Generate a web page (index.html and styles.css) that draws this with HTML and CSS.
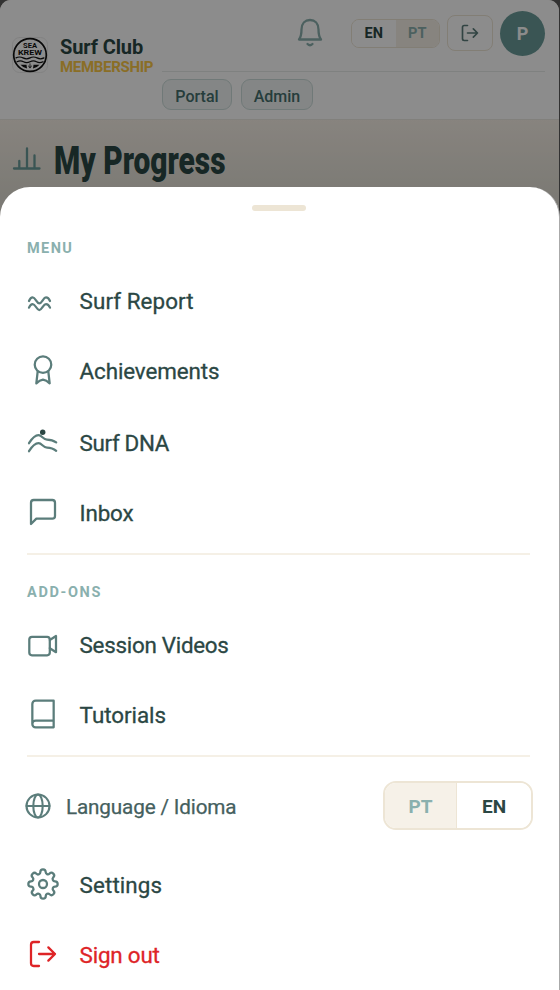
FILE: index.html
```html
<!DOCTYPE html>
<html lang="en">
<head>
<meta charset="utf-8">
<title>Surf Club</title>
<link rel="stylesheet" href="styles.css">
</head>
<body>
<div class="app">
  <header class="header">
    <div class="brand">
      <svg class="logo" viewBox="0 0 36 36">
        <rect x=".5" y=".5" width="35" height="35" rx="7" fill="#fff" stroke="#ebebeb"/>
        <circle cx="18" cy="18" r="16.3" fill="none" stroke="#111" stroke-width="1.7"/>
        <text x="18" y="10.8" textLength="14" lengthAdjust="spacingAndGlyphs">SEA</text>
        <text x="18" y="17.6" textLength="24" lengthAdjust="spacingAndGlyphs">KREW</text>
        <path d="M4 20.900q3.500-1.800 7 0t7 0 7 0 7 0M5 24.700q3.300-1.800 6.500 0t6.500 0 6.500 0 6.500 0" fill="none" stroke="#111" stroke-width="1.2"/>
        <path d="M8.500 27.700h6l.5 3.800q-4-.8-6.500-3.800zM27.500 27.700h-6l-.5 3.800q4-.8 6.500-3.800z" fill="#111"/>
        <path d="M18 26.800v4M16.700 29q0 1.600 1.300 1.600t1.300-1.600" fill="none" stroke="#111" stroke-width=".8"/>
      </svg>
      <div class="brand-text"><div class="brand-name">Surf Club</div><div class="brand-sub">MEMBERSHIP</div></div>
    </div>
    <div class="header-main">
      <div class="tools">
        <svg class="bell" viewBox="0 0 26 30"><path d="M2 21.500C4.300 18.500 4.500 16 4.500 11.500C4.500 5.500 8 2 13 2s8.500 3.500 8.500 9.500c0 4.500.2 7 2.500 10zM10.500 26q2.500 2.400 5 0"/></svg>
        <div class="mini-toggle"><span class="on">EN</span><span class="off">PT</span></div>
        <button class="exit"><svg viewBox="0 0 24 24"><path d="M9 21H5a2 2 0 0 1-2-2V5a2 2 0 0 1 2-2h4M16 17l5-5-5-5M21 12H9"/></svg></button>
        <div class="avatar">P</div>
      </div>
      <nav class="tabs"><a class="tab portal">Portal</a><a class="tab admin">Admin</a></nav>
    </div>
  </header>
  <main class="page">
    <svg class="chart" viewBox="0 0 30 26"><path d="M2 22.500h25.500M7.300 22V15M15 22V2.500M22.500 22V9.500"/></svg>
    <h1>My Progress</h1>
  </main>
</div>
<div class="overlay"></div>
<section class="sheet">
  <div class="handle"></div>
  <h2 class="label">MENU</h2>
  <a class="item"><svg class="icon wide" viewBox="0 0 32 32"><path d="M2 17C3 14.500 4 13.300 5.700 13.300C8.500 13.300 9.500 19.300 12.300 19.300S16.300 13.300 19 13.300C20.800 13.300 22 14.500 23 17M2 23.700C3 21.200 4 20 5.700 20C8.500 20 9.500 26 12.300 26S16.300 20 19 20C20.800 20 22 21.200 23 23.700"/></svg><span class="t-report">Surf Report</span></a>
  <a class="item"><svg class="icon" viewBox="0 0 24 24"><circle cx="12" cy="8" r="6.200"/><path d="M8 13.200L7 22q2.500-2.300 5-2.700q2.500.4 5 2.700l-1-8.800"/></svg><span class="t-achieve">Achievements</span></a>
  <a class="item gap"><svg class="icon wide" viewBox="0 0 32 32"><path d="M2 17.200C5 12.500 8.500 9.200 11.500 9.200C15 9.200 16 13.500 20 13.500C24 13.500 26 14 29.200 16.300M2 25.200C5 20.500 8.500 17.200 11.500 17.200C15 17.200 16 21.500 20 21.500C24 21.500 26 22 29.200 24.800"/><circle class="dot" cx="15.700" cy="6.300" r="2.700"/></svg><span class="t-dna">Surf DNA</span></a>
  <a class="item"><svg class="icon" viewBox="0 0 24 24"><path d="M21 15a2 2 0 0 1-2 2H7l-4 4V5a2 2 0 0 1 2-2h14a2 2 0 0 1 2 2z"/></svg><span class="t-inbox">Inbox</span></a>
  <div class="rule"></div>
  <h2 class="label addons">ADD-ONS</h2>
  <a class="item"><svg class="icon wide" viewBox="0 0 32 32"><rect x="2.300" y="8.800" width="20.500" height="18.500" rx="2.700"/><path d="M22.800 12l6.200-4v16.200l-6.200-4"/></svg><span class="t-videos">Session Videos</span></a>
  <a class="item"><svg class="icon" viewBox="0 0 24 24"><path d="M4 19.500A2.500 2.500 0 0 1 6.500 17H20M6.500 2H20v20H6.500A2.500 2.500 0 0 1 4 19.500v-15A2.500 2.500 0 0 1 6.500 2z"/></svg><span class="t-tutorials">Tutorials</span></a>
  <div class="rule"></div>
  <div class="language">
    <svg class="globe" viewBox="0 0 28 28"><circle cx="14" cy="14" r="11.500"/><ellipse cx="14" cy="14" rx="4.700" ry="11.500"/><path d="M2.500 14h23"/></svg>
    <span class="t-language">Language / Idioma</span>
    <div class="toggle"><span class="off">PT</span><span class="on">EN</span></div>
  </div>
  <a class="item"><svg class="icon" viewBox="0 0 24 24"><circle cx="12" cy="12" r="3"/><path d="M19.400 15a1.650 1.650 0 0 0 .33 1.820l.06.06a2 2 0 0 1-2.830 2.830l-.06-.06a1.650 1.650 0 0 0-1.820-.33 1.650 1.650 0 0 0-1 1.510V21a2 2 0 0 1-4 0v-.09A1.650 1.650 0 0 0 9 19.400a1.650 1.650 0 0 0-1.820.33l-.06.06a2 2 0 0 1-2.830-2.830l.06-.06A1.650 1.650 0 0 0 4.680 15a1.650 1.650 0 0 0-1.510-1H3a2 2 0 0 1 0-4h.09A1.650 1.650 0 0 0 4.600 9a1.650 1.650 0 0 0-.33-1.820l-.06-.06a2 2 0 0 1 2.830-2.830l.06.06A1.650 1.650 0 0 0 9 4.680 1.650 1.650 0 0 0 10 3.170V3a2 2 0 0 1 4 0v.09a1.650 1.650 0 0 0 1 1.510 1.650 1.650 0 0 0 1.820-.33l.06-.06a2 2 0 0 1 2.830 2.830l-.06.06A1.650 1.650 0 0 0 19.400 9a1.650 1.650 0 0 0 1.510 1H21a2 2 0 0 1 0 4h-.09a1.650 1.650 0 0 0-1.510 1z"/></svg><span class="t-settings">Settings</span></a>
  <a class="item danger"><svg class="icon" viewBox="0 0 24 24"><path d="M9 21H5a2 2 0 0 1-2-2V5a2 2 0 0 1 2-2h4M16 17l5-5-5-5M21 12H9"/></svg><span class="t-signout">Sign out</span></a>
</section>
</body>
</html>
```
FILE: styles.css
```css
* { box-sizing: border-box; }
html, body { margin: 0; height: 990px; overflow: hidden; }
body { position: relative; background: #5c5c5c; font-family: Roboto, "Liberation Sans", sans-serif; color: #2b4744; }
svg { display: block; flex: none; fill: none; stroke-linecap: round; stroke-linejoin: round; }
.app { width: 559px; height: 990px; border-radius: 11px 11px 0 0; overflow: hidden; background: linear-gradient(#f7f0e7 119px, #e2dfd5 195px); }
.header { display: flex; height: 120px; background: #fff; border-bottom: 1px solid #ece9e2; padding-left: 12px; }
.brand { display: flex; width: 150px; padding-top: 37px; gap: 12px; }
.logo { width: 36px; height: 36px; }
.logo text { font: 700 7px/1 Roboto, sans-serif; fill: #111; text-anchor: middle; }
.brand-text { white-space: nowrap; }
.brand-name { font-size: 20px; font-weight: 700; line-height: 20px; letter-spacing: -.1px; }
.brand-sub { font-size: 15px; font-weight: 700; line-height: 20px; color: #fbc846; letter-spacing: -.3px; }
.header-main { width: 383px; }
.tools { display: flex; align-items: center; justify-content: flex-end; height: 72px; padding-bottom: 5px; border-bottom: 1px solid #e8ecea; }
.bell { width: 26px; height: 30px; stroke: #8ab0ae; stroke-width: 2.300; margin-right: 28px; }
.mini-toggle { display: flex; width: 89px; height: 29px; border: 1px solid #ede5d5; border-radius: 8px; overflow: hidden; margin-right: 7px; font-size: 14.500px; font-weight: 700; }
.mini-toggle span, .toggle span { flex: 1; display: flex; align-items: center; justify-content: center; }
.off { background: #f6f1e8; color: #8ab0ae; }
.on { background: #fff; color: #2b4744; }
.exit { display: flex; align-items: center; justify-content: center; width: 46px; height: 36px; padding: 0; background: #fff; border: 1px solid #ede5d5; border-radius: 8px; margin-right: 7px; }
.exit svg { width: 20px; height: 20px; stroke: #5b7d7b; stroke-width: 2; }
.avatar { width: 45px; height: 45px; border-radius: 50%; background: #6a9c99; color: #fff; font-weight: 700; font-size: 18px; line-height: 45px; text-align: center; }
.tabs { display: flex; gap: 9px; padding-top: 7px; }
.tab { height: 31px; border: 1px solid #ccdcda; border-radius: 9px; background: #f0f5f4; color: #45706e; font-size: 16px; font-weight: 500; line-height: 33px; text-align: center; }
.portal { width: 70px; }
.admin { width: 72px; }
.page { display: flex; padding: 26px 0 0 12px; }
.chart { width: 30px; height: 26px; stroke: #6a9c99; stroke-width: 2.300; }
h1 { margin: -6px 0 0 12px; font-size: 38px; line-height: 42px; font-weight: 900; white-space: nowrap; transform: scaleX(.787); transform-origin: left; }
.overlay { position: absolute; inset: 0; background: rgba(0, 0, 0, .45); }
.sheet { position: absolute; left: 0; top: 187px; width: 560px; height: 803px; background: #fff; border-right: 1px solid #aaa; border-radius: 30px 30px 0 0; padding: 18px 29px 0 27px; }
.handle { width: 54px; height: 6px; border-radius: 3px; background: #ede5d5; margin-left: 225px; }
.label { margin: 0; padding-top: 28px; height: 55px; font-size: 14.500px; line-height: 20px; font-weight: 700; color: #8ab0ae; letter-spacing: 1.400px; white-space: nowrap; }
.addons { letter-spacing: 1.650px; }
.item { display: flex; align-items: center; height: 70px; font-size: 22.400px; white-space: nowrap; }
.gap { margin-top: 2px; }
.item span { margin-left: 21px; font-weight: 400; line-height: 30px; -webkit-text-stroke: .3px currentColor; }
.item .t-report { letter-spacing: .07px; }
.item .t-achieve { letter-spacing: -.12px; }
.item .t-dna { letter-spacing: -.35px; }
.item .t-inbox { letter-spacing: -.2px; }
.item .t-videos { letter-spacing: -.28px; }
.item .t-tutorials { letter-spacing: -.04px; }
.item .t-settings { letter-spacing: .1px; }
.item .t-signout { letter-spacing: -.2px; }
.icon { width: 32px; height: 32px; margin-top: -2px; margin-left: -.4px; stroke: #5b7d7b; stroke-width: 1.700; }
.wide { stroke-width: 2.250; }
.icon .dot { fill: #2b4744; stroke: none; }
.rule { height: 2px; background: #f5f0e6; margin-top: 5px; }
.language { display: flex; align-items: center; height: 93px; padding-top: 5px; margin: 0 -3px 0 -3.500px; }
.globe { width: 28px; height: 28px; margin-top: -1px; stroke: #5b7d7b; stroke-width: 2.100; }
.t-language { margin: 1px 0 0 14.500px; font-size: 20.700px; letter-spacing: -.15px; color: #45605e; white-space: nowrap; -webkit-text-stroke: .25px currentColor; }
.toggle { display: flex; width: 150px; height: 49px; margin: -2px 0 0 auto; border: 2px solid #ede5d5; border-radius: 13px; overflow: hidden; font-size: 19px; font-weight: 700; }
.toggle span { padding-top: 2px; }
.toggle .off { flex: 0 0 72px; border-right: 1px solid #ede5d5; }
.danger { color: #de2427; }
.danger .icon { stroke: #de2427; }
```
